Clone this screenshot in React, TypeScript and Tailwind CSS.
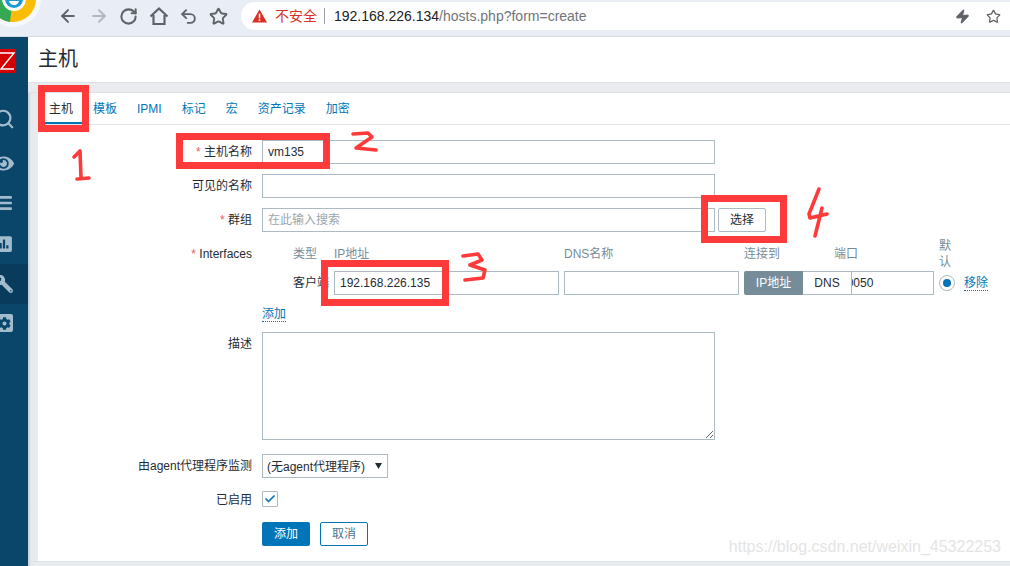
import { ArrowLeft, ArrowRight, Check, RotateCw, Search, Star, Undo2, Zap } from 'lucide-react';
import { FaBars, FaCog, FaEye, FaPoll, FaWrench } from 'react-icons/fa';

const fieldClass = "h-6 border border-[#acbbc2] bg-white px-[5px] text-xs text-[#1f2c33] outline-none";
const tabs = ["主机", "模板", "IPMI", "标记", "宏", "资产记录", "加密"];

function Label({ text, required, className = "" }: { text: string; required?: boolean; className?: string }) {
  return (
    <div className={`w-[214px] shrink-0 text-right leading-4 text-[#1f2c33] ${className}`}>
      {required && <span className="text-[#e85a5a]">* </span>}
      {text}
    </div>
  );
}

function Toolbar() {
  return (
    <div className="relative flex h-[37px] shrink-0 items-start border-b border-[#d5d9e0] bg-[#e9edf5]">
      {/* browser logo, cut off by the top of the window */}
      <svg className="absolute left-0 top-0" width="42" height="28" viewBox="0 0 42 28">
        <circle cx="13" cy="-1" r="28" fill="#f6f8fb" />
        <circle cx="13" cy="-1" r="23" fill="#fbbc05" />
        <path d="M13 -1 L-10 -1 A23 23 0 0 0 10 22 Z" fill="#34a853" />
        <circle cx="14" cy="-1" r="12" fill="#ffffff" />
        <circle cx="14" cy="-1" r="9" fill="#1a9ad6" />
        <path d="M9 -1 A5 5 0 0 0 19 1 L9 1 Z" fill="#ffffff" />
      </svg>
      <div className="ml-[58px] mt-[6px] flex items-center gap-[10.6px] text-[#5f6368]">
        <ArrowLeft size={20} strokeWidth={2.4} />
        <ArrowRight size={20} strokeWidth={2.4} className="text-[#b4b7bb]" />
        <RotateCw size={19} strokeWidth={2.6} />
        <svg width="20" height="20" viewBox="0 0 20 20" fill="none" stroke="currentColor" strokeWidth="2.2" strokeLinejoin="miter">
          <path d="M1.5 10.5 L10 2.5 L18.5 10.5 M4.5 9 V18 H15.5 V9" />
        </svg>
        <Undo2 size={19} strokeWidth={2.4} />
        <Star size={19} strokeWidth={2.4} />
      </div>
      <div className="ml-[13px] mt-[2px] flex h-[28px] flex-1 items-center rounded-l-[14px] bg-white pl-[11px]">
        <svg width="15" height="14" viewBox="0 0 16 14">
          <path d="M8 0 L16 14 L0 14 Z" fill="#d93025" />
          <rect x="7.2" y="4.5" width="1.6" height="5" fill="#fff" />
          <rect x="7.2" y="10.5" width="1.6" height="1.8" fill="#fff" />
        </svg>
        <span className="ml-[8px] text-[14px] text-[#d93025]">不安全</span>
        <span className="ml-[7px] h-[16px] w-px bg-[#9aa0a6]" />
        <span className="ml-[9px] text-[14px] text-[#202124]">
          192.168.226.134<span className="text-[#70757a]">/hosts.php?form=create</span>
        </span>
        <Zap size={15} className="ml-auto fill-[#5f6368] text-[#5f6368]" />
        <Star size={15} strokeWidth={2} className="ml-[16px] mr-[9px] text-[#5f6368]" />
      </div>
    </div>
  );
}

function Sidebar() {
  return (
    <div className="flex w-7 shrink-0 flex-col overflow-hidden bg-[#0a466a] text-[#a3bccd]">
      {/* logo is scrolled partly off the left edge */}
      <svg className="mt-[12px]" width="16" height="24" viewBox="0 0 16 24">
        <rect width="16" height="24" fill="#d40000" />
        <path d="M0 4 H14 L1 20 H14" fill="none" stroke="#ffffff" strokeWidth="1.4" />
      </svg>
      <div className="mt-[26px] flex h-10 items-center"><Search size={22} strokeWidth={2.4} className="-ml-[7px] shrink-0" /></div>
      <div className="mt-[4px] flex h-10 items-center"><FaEye size={21} className="-ml-[7px]" /></div>
      <div className="flex h-10 items-center"><FaBars size={18} className="-ml-[5px]" /></div>
      <div className="flex h-[41px] items-center"><FaPoll size={18} className="-ml-[5px]" /></div>
      <div className="flex h-10 items-center bg-[#093c5c]"><FaWrench size={18} className="-ml-[5px] -scale-x-100" /></div>
      <div className="flex h-[38px] items-center">
        <div className="-ml-[5px] flex h-[18px] w-[18px] items-center justify-center rounded-[2px] bg-[#a3bccd]">
          <FaCog size={13} className="text-[#0a466a]" />
        </div>
      </div>
    </div>
  );
}

function InterfacesTable() {
  return (
    <div className="flex flex-col pl-[31px]">
      <div className="flex h-8 items-center text-[#768d99]">
        <div className="w-[41px]">类型</div>
        <div className="w-[230px]">IP地址</div>
        <div className="w-[180px]">DNS名称</div>
        <div className="w-[90px]">连接到</div>
        <div className="w-[105px]">端口</div>
        <div className="w-[14px] leading-4">默认</div>
      </div>
      <div className="mt-px flex items-center">
        <div className="w-[41px] whitespace-nowrap text-[#1f2c33]">客户端</div>
        <input readOnly value="192.168.226.135" className={`${fieldClass} w-[225px]`} />
        <input readOnly className={`${fieldClass} ml-[5px] w-[175px]`} />
        <div className="ml-[5px] flex h-6 w-[108px]">
          <div className="flex w-[59px] items-center justify-center rounded-l-[2px] bg-[#768d99] text-white">IP地址</div>
          <div className="flex flex-1 items-center justify-center border-y border-r border-[#acbbc2] bg-white text-[#1f2c33]">DNS</div>
        </div>
        <div className="h-6 w-[82px] overflow-hidden border-y border-r border-[#acbbc2] text-[#1f2c33]">
          <span className="-ml-[12px] block leading-[22px]">10050</span>
        </div>
        <div className="ml-[5px] flex h-4 w-4 items-center justify-center rounded-full border border-[#acbbc2]">
          <div className="h-2 w-2 rounded-full bg-[#0275b8]" />
        </div>
        <a className="ml-[9px] border-b border-dotted border-[#0275b8] leading-[14px] text-[#0275b8]">移除</a>
      </div>
      <a className="-ml-[31px] mt-3 w-max border-b border-dotted border-[#0275b8] leading-[14px] text-[#0275b8]">添加</a>
    </div>
  );
}

function HostForm() {
  return (
    <div className="flex flex-col pt-[15px]">
      <div className="flex items-center gap-[10px]">
        <Label text="主机名称" required />
        <input readOnly value="vm135" className={`${fieldClass} w-[453px]`} />
      </div>
      <div className="mt-[10px] flex items-center gap-[10px]">
        <Label text="可见的名称" />
        <input readOnly className={`${fieldClass} w-[453px]`} />
      </div>
      <div className="mt-[10px] flex items-center gap-[10px]">
        <Label text="群组" required />
        <input readOnly placeholder="在此输入搜索" className={`${fieldClass} w-[453px] placeholder:text-[#9aa6ad]`} />
        <button className="-ml-[7px] h-6 w-12 rounded-[2px] border border-[#acbbc2] bg-white text-[#1f2c33]">选择</button>
      </div>
      <div className="mt-[6px] flex items-start gap-[10px]">
        <Label text="Interfaces" required className="pt-2" />
        <InterfacesTable />
      </div>
      <div className="mt-[10px] flex items-start gap-[10px]">
        <Label text="描述" className="pt-1" />
        <textarea readOnly className="h-[108px] w-[453px] border border-[#acbbc2] bg-white outline-none" />
      </div>
      <div className="mt-[14px] flex items-center gap-[10px]">
        <Label text="由agent代理程序监测" />
        <div className="flex h-6 w-[126px] items-center border border-[#acbbc2] pl-[4px] pr-[5px] pt-px text-[#1f2c33]">
          (无agent代理程序)
          <svg className="ml-auto -mt-[3px]" width="7" height="7" viewBox="0 0 7 7"><path d="M0 1 L7 1 L3.5 7 Z" fill="#1f2c33" /></svg>
        </div>
      </div>
      <div className="mt-[13px] flex items-start gap-[10px]">
        <Label text="已启用" className="pt-px" />
        <div className="flex h-4 w-4 items-center justify-center rounded-[1px] border border-[#acbbc2]">
          <Check size={12} strokeWidth={3.5} className="text-[#0275b8]" />
        </div>
      </div>
      <div className="ml-[224px] mt-[14px] flex gap-[10px]">
        <button className="h-6 w-12 rounded-[2px] bg-[#0275b8] text-white">添加</button>
        <button className="h-6 w-12 rounded-[2px] border border-[#0275b8] bg-white text-[#4a7690]">取消</button>
      </div>
    </div>
  );
}

export default function App() {
  const redBoxes = [
    "left-[38px] top-[85px] h-[47px] w-[51px]",
    "left-[176px] top-[133px] h-[36px] w-[154px]",
    "left-[321px] top-[260px] h-[46px] w-[128px]",
    "left-[701px] top-[195px] h-[48px] w-[86px]",
  ];
  return (
    <div className="relative flex h-[566px] w-[1010px] flex-col overflow-hidden bg-[#e9ecef] font-['Liberation_Sans','Noto_Sans_CJK_SC',sans-serif] text-xs">
      <Toolbar />
      <div className="flex flex-1">
        <Sidebar />
        <div className="flex flex-1 flex-col bg-gradient-to-r from-[#c5cdd3] via-[#e6eaed] via-[30%] to-[#e9ecef] bg-[length:10px_100%] bg-no-repeat">
          <div className="flex h-[45px] shrink-0 items-center bg-white pl-[10px] text-[20px] text-[#1f2c33]">主机</div>
          <div className="h-[11px] shrink-0 border-y border-[#dfe2e5] bg-[#e9ebee]" />
          <div className="ml-[10px] flex flex-1 flex-col bg-white">
            <div className="flex h-[32px] shrink-0 border-b border-[#e3e6e8] pl-px">
              {tabs.map((tab, i) => (
                <div
                  key={tab}
                  className={`flex h-[31px] items-center px-[10px] ${i === 0 ? "border-b-2 border-[#0275b8] pt-[2px] text-[#1f2c33]" : "text-[#0275b8]"}`}
                >
                  {tab}
                </div>
              ))}
            </div>
            <HostForm />
          </div>
          <div className="h-[5px] shrink-0 border-t border-[#dfe2e5]" />
        </div>
      </div>

      {/* annotations drawn on top of the screenshot */}
      {redBoxes.map((box) => (
        <div key={box} className={`absolute border-[7px] border-[#ff3a3a] ${box}`} />
      ))}
      <svg className="pointer-events-none absolute inset-0" width="1010" height="566" fill="none" stroke="#ff3a3a" strokeWidth="3.6" strokeLinecap="round" strokeLinejoin="round">
        <path d="M74 157 L80 151 L81 178 M77 179 L89 178" />
        <path d="M353 134 L368 133 L372 137 L356 148 L376 150" />
        <path d="M463 256 L478 254 L482 260 L470 265 L485 270 L483 278 L465 280" />
        <path d="M819 189 L809 214 L810 218 L827 214 M822 208 L815 236" />
      </svg>
      <div className="absolute bottom-[9px] right-[9px] text-[16px] leading-5 text-[#e4e4e4]">https://blog.csdn.net/weixin_45322253</div>
    </div>
  );
}
